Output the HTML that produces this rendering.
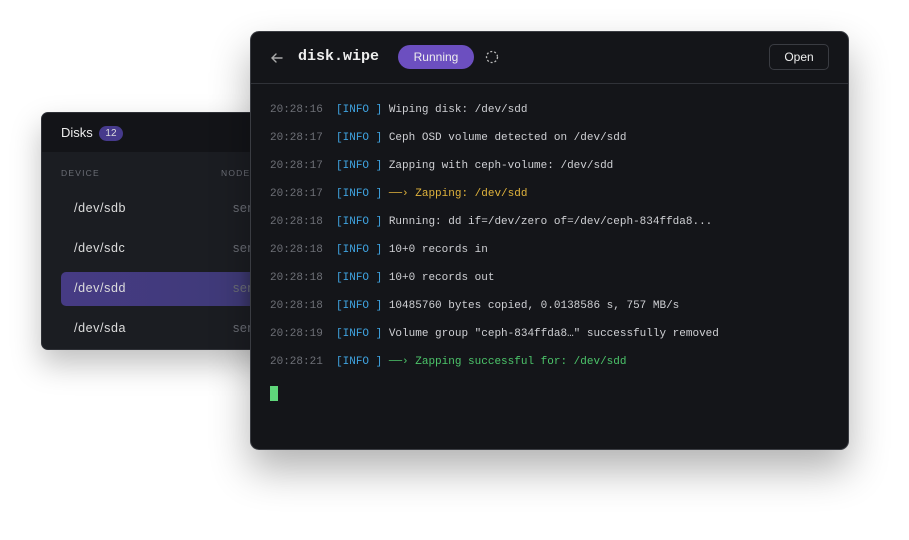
<!DOCTYPE html>
<html><head><meta charset="utf-8"><style>
*{margin:0;padding:0;box-sizing:border-box}
body{width:909px;height:540px;background:#fff;position:relative;overflow:hidden;font-family:"Liberation Sans",sans-serif}
.disks{position:absolute;left:41px;top:112px;width:240px;height:238px;background:#1b1d22;border:1px solid #2e3036;border-radius:7px;overflow:hidden;box-shadow:0 14px 30px rgba(0,0,0,.25)}
.dh{height:39px;background:#131418;color:#eee;font-size:13px;padding:12px 0 0 19px}
.badge{display:inline-block;background:#463a8c;color:#ddd;font-size:10px;border-radius:9px;padding:2px 6px;margin-left:3px;vertical-align:1px}
.col{position:absolute;top:55px;font-size:8.5px;letter-spacing:1.2px;color:#6b6e76}
.row{position:absolute;left:19px;width:210px;height:34px;border-radius:5px;color:#ddd;font-size:12.5px;padding:9px 0 0 13px;letter-spacing:.6px}
.row span{position:absolute;left:172px;color:#6b6e76}
.sel{background:linear-gradient(90deg,#463b84,#3f3a78 85%,#2a2a40)}
.main{position:absolute;left:250px;top:31px;width:599px;height:419px;background:#141519;border:1px solid #3a3c42;border-radius:9px;box-shadow:0 20px 40px rgba(0,0,0,.3);overflow:hidden}
.hd{height:52px;border-bottom:1px solid #303238;position:relative}
.title{position:absolute;left:47px;top:16px;font-family:"Liberation Mono",monospace;font-weight:bold;font-size:15px;color:#eee}
.run{position:absolute;left:147px;top:13px;width:76px;height:24px;border-radius:12px;background:#6c4fc0;color:#eee;font-size:12px;text-align:center;line-height:24px}
.open{position:absolute;right:19px;top:12px;width:60px;height:26px;border:1px solid #3a3c42;border-radius:5px;color:#eee;font-size:12px;text-align:center;line-height:24px}
.log{position:absolute;left:19px;top:64px;font-family:"Liberation Mono",monospace;font-size:11px;line-height:28px;color:#cfd0d4;white-space:pre}
.t{color:#6e7077}.i{color:#3fa3e0}.y{color:#e0b33c}.g{color:#4cc56a}
.cur{position:absolute;left:19px;top:354px;width:8px;height:15px;background:#5fd67a}
</style></head><body>
<div class="disks">
<div class="dh">Disks <span class="badge">12</span></div>
<div class="col" style="left:19px">DEVICE</div>
<div class="col" style="left:179px">NODE</div>
<div class="row" style="top:79px">/dev/sdb<span>ser</span></div>
<div class="row" style="top:119px">/dev/sdc<span>ser</span></div>
<div class="row sel" style="top:159px">/dev/sdd<span>ser</span></div>
<div class="row" style="top:199px">/dev/sda<span>ser</span></div>
</div>
<div class="main">
<div class="hd">
<svg style="position:absolute;left:18px;top:18px" width="16" height="16" viewBox="0 0 16 16" fill="none" stroke="#aaa" stroke-width="1.4" stroke-linecap="round"><path d="M13 8H3M7 4L3 8l4 4"/></svg>
<div class="title">disk.wipe</div>
<div class="run">Running</div>
<svg style="position:absolute;left:234px;top:18px" width="14" height="14" viewBox="0 0 14 14" fill="none" stroke="#bbb" stroke-width="1.3" stroke-dasharray="2 2"><circle cx="7" cy="7" r="5.5"/></svg>
<div class="open">Open</div>
</div>
<div class="log"><span class="t">20:28:16</span>  <span class="i">[INFO ]</span> Wiping disk: /dev/sdd
<span class="t">20:28:17</span>  <span class="i">[INFO ]</span> Ceph OSD volume detected on /dev/sdd
<span class="t">20:28:17</span>  <span class="i">[INFO ]</span> Zapping with ceph-volume: /dev/sdd
<span class="t">20:28:17</span>  <span class="i">[INFO ]</span> <span class="y">──› Zapping: /dev/sdd</span>
<span class="t">20:28:18</span>  <span class="i">[INFO ]</span> Running: dd if=/dev/zero of=/dev/ceph-834ffda8...
<span class="t">20:28:18</span>  <span class="i">[INFO ]</span> 10+0 records in
<span class="t">20:28:18</span>  <span class="i">[INFO ]</span> 10+0 records out
<span class="t">20:28:18</span>  <span class="i">[INFO ]</span> 10485760 bytes copied, 0.0138586 s, 757 MB/s
<span class="t">20:28:19</span>  <span class="i">[INFO ]</span> Volume group "ceph-834ffda8…" successfully removed
<span class="t">20:28:21</span>  <span class="i">[INFO ]</span> <span class="g">──› Zapping successful for: /dev/sdd</span></div>
<div class="cur"></div>
</div>
</body></html>
